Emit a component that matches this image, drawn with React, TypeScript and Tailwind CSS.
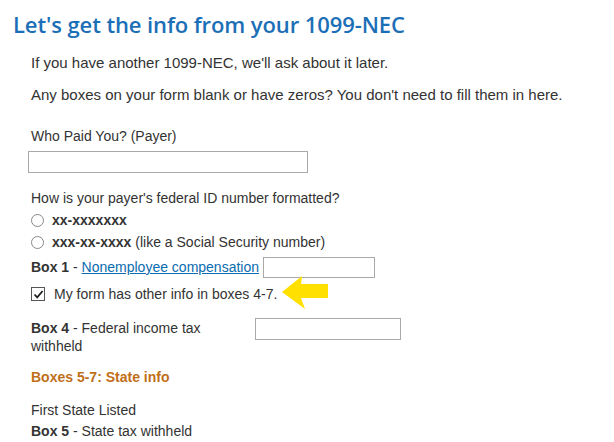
export default function App() {
  return (
    <div className="w-[614px] h-[442px] overflow-hidden bg-white font-['Liberation_Sans',Arial,sans-serif] text-[14px] text-[#333]">
      <h1 className="pl-[13px] pt-[10px] text-[22px] leading-[28px] font-semibold text-[#1c6fb6] font-['Open_Sans',sans-serif] tracking-[-0.1px]">
        Let's get the info from your 1099-NEC
      </h1>

      <div className="pl-[31px]">
        <p className="mt-[16px] text-[15px] leading-[17px]">If you have another 1099-NEC, we'll ask about it later.</p>
        <p className="mt-[15px] text-[15px] leading-[17px]">
          Any boxes on your form blank or have zeros? You don't need to fill them in here.
        </p>

        <label className="block mt-[25px] leading-[17px]">Who Paid You? (Payer)</label>
        <input
          type="text"
          className="block -ml-[3px] mt-[6px] w-[280px] h-[22px] border border-[#a9a9a9] bg-white"
        />

        <p className="mt-[17px] leading-[17px]">How is your payer's federal ID number formatted?</p>
        <div className="mt-[3px] flex items-center h-[20px]">
          <span className="w-[13px] h-[13px] rounded-full border border-[#888]" />
          <span className="ml-[8px] font-bold">xx-xxxxxxx</span>
        </div>
        <div className="mt-[2px] flex items-center h-[20px]">
          <span className="w-[13px] h-[13px] rounded-full border border-[#888]" />
          <span className="ml-[8px]">
            <b>xxx-xx-xxxx</b> (like a Social Security number)
          </span>
        </div>

        <div className="mt-[4px] flex items-center h-[22px]">
          <span>
            <b>Box 1</b> - <a className="text-[#0b6cb0] underline">Nonemployee compensation</a>
          </span>
          <input type="text" className="ml-[4px] w-[112px] h-[21px] border border-[#a9a9a9] bg-white" />
        </div>

        <div className="relative mt-[5px] flex items-center h-[22px]">
          <span className="flex items-center justify-center w-[14px] h-[14px] border border-[#555] bg-white">
            <svg width="11" height="11" viewBox="0 0 11 11">
              <path d="M1.5 5.5 L4.2 8.3 L9.6 2" fill="none" stroke="#222" strokeWidth="1.8" />
            </svg>
          </span>
          <span className="ml-[9px]">My form has other info in boxes 4-7.</span>
          <svg className="absolute left-[250px] top-[-7px]" width="50" height="38" viewBox="0 0 50 38">
            <polygon points="1,16 21,0 20,8 47,8 47,22 20,22 24,33" fill="#ffe000" />
          </svg>
        </div>

        <div className="mt-[14px] flex items-start">
          <p className="w-[224px] leading-[18px]">
            <b>Box 4</b> - Federal income tax withheld
          </p>
          <input type="text" className="mt-[-1px] w-[146px] h-[22px] border border-[#a9a9a9] bg-white" />
        </div>

        <p className="mt-[14px] font-bold text-[#c06f1a] leading-[17px]">Boxes 5-7: State info</p>

        <p className="mt-[15px] leading-[18px]">First State Listed</p>
        <p className="mt-[3px] leading-[18px]">
          <b>Box 5</b> - State tax withheld
        </p>
      </div>
    </div>
  );
}
